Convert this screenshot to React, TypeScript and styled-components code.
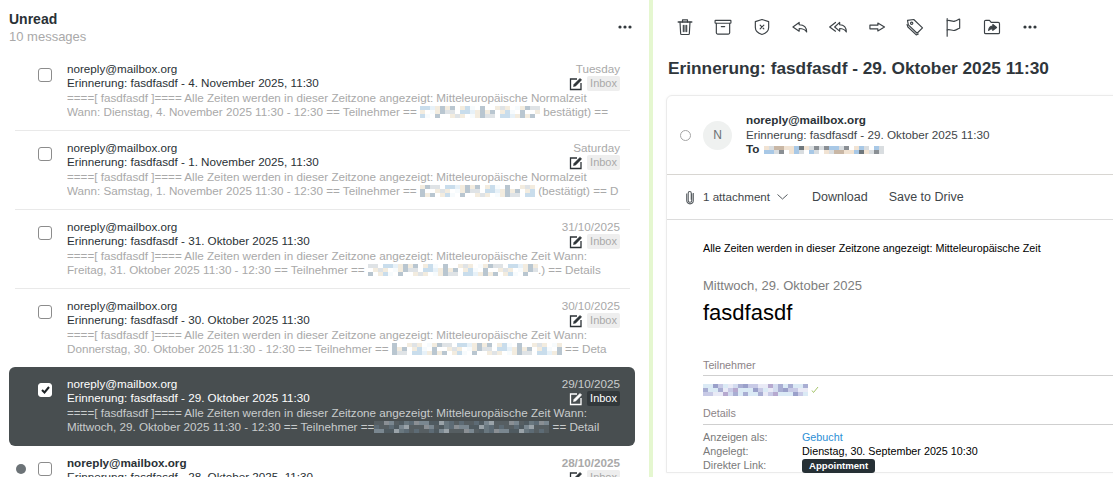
import React from 'react';
import styled, { createGlobalStyle } from 'styled-components';

const GlobalStyle = createGlobalStyle`
  html, body {
    margin: 0;
    height: 100%;
    overflow: hidden;
    background: #fff;
    font-family: "Liberation Sans", Arial, sans-serif;
    color: #2a3136;
  }
`;

const Page = styled.div`
  display: flex;
  width: 1113px;
  height: 477px;
  overflow: hidden;
`;

const ListPane = styled.section`
  flex: 0 0 649px;
  overflow: hidden;
`;

const Divider = styled.div`
  flex: 0 0 4px;
  background: #e5f7d0;
`;

const ListHeader = styled.header`
  display: flex;
  justify-content: space-between;
  align-items: center;
  box-sizing: border-box;
  height: 52px;
  padding: 2px 17px 0 9px;
`;

const TitleBlock = styled.div`
  margin-top: 2px;
`;

const Folder = styled.h2`
  margin: 0;
  font-size: 14px;
  line-height: 17px;
  font-weight: 700;
  color: #2a3136;
`;

const Count = styled.div`
  font-size: 13px;
  line-height: 17px;
  color: #a9a9a9;
`;

const MessageRow = styled.article<{ $selected?: boolean }>`
  position: relative;
  display: flex;
  height: 79px;
  box-sizing: border-box;
  margin-left: 9px;
  margin-top: ${p => (p.$selected ? '-1px' : '0')};
  width: 626px;
  padding: 10px 15px 0 7px;
  border-radius: ${p => (p.$selected ? '6px' : '0')};
  background: ${p => (p.$selected ? '#484e50' : 'transparent')};
  color: ${p => (p.$selected ? '#fff' : '#2a3136')};
`;

const RowSeparator = styled.div`
  height: 1px;
  margin: -1px 19px 0 15px;
  background: #e9e9e9;
`;

const UnreadDot = styled.span<{ $on?: boolean }>`
  flex: 0 0 10px;
  height: 10px;
  margin-top: 8px;
  border-radius: 50%;
  background: ${p => (p.$on ? '#6c7377' : 'transparent')};
`;

const Check = styled.span<{ $checked?: boolean }>`
  flex: 0 0 auto;
  display: flex;
  align-items: center;
  justify-content: center;
  box-sizing: border-box;
  width: 14px;
  height: 14px;
  margin: 6px 15px 0 12px;
  border: 1px solid #8c8c8c;
  border-radius: 3px;
  background: #fff;
  ${p => p.$checked && 'border-color: #fff;'}
`;

const RowBody = styled.div`
  flex: 1;
  min-width: 0;
  font-size: 11.66px;
  line-height: 14.4px;
`;

const TopLine = styled.div<{ $unread?: boolean }>`
  display: flex;
  justify-content: space-between;
  font-weight: ${p => (p.$unread ? 700 : 400)};
`;

const DateText = styled.span<{ $selected?: boolean }>`
  color: ${p => (p.$selected ? '#c9cccd' : '#a9a9a9')};
`;

const SubjectLine = styled.div`
  display: flex;
  justify-content: space-between;
  align-items: center;
  height: 14.4px;
`;

const Tags = styled.span`
  display: flex;
  align-items: center;
  gap: 4px;
`;

const InboxChip = styled.span<{ $selected?: boolean }>`
  padding: 0 3px;
  height: 15px;
  font-size: 11px;
  line-height: 15px;
  border-radius: 2px;
  background: ${p => (p.$selected ? '#32383b' : '#eeeeee')};
  color: ${p => (p.$selected ? '#fff' : '#a9a9a9')};
`;

const Preview = styled.div<{ $selected?: boolean }>`
  display: flex;
  align-items: center;
  height: 14.4px;
  white-space: pre;
  overflow: hidden;
  color: ${p => (p.$selected ? '#c9cccd' : '#a9a9a9')};
`;

const MosaicGrid = styled.span<{ $rows: number }>`
  flex: 0 0 auto;
  display: inline-grid;
  grid-auto-flow: column;
  grid-template-rows: repeat(${p => p.$rows}, 4px);
  grid-auto-columns: 5px;
`;

const ReadPane = styled.section`
  flex: 1;
  min-width: 0;
  overflow: hidden;
`;

const Toolbar = styled.div`
  display: flex;
  align-items: center;
  height: 54px;
  padding-left: 13px;
`;

const ToolButton = styled.span`
  flex: 0 0 38.3px;
  display: flex;
  justify-content: center;
  color: #3c4246;
`;

const MailTitle = styled.h1`
  margin: 1px 0 14px 15px;
  font-size: 17.28px;
  line-height: 26px;
  font-weight: 700;
  color: #2f363b;
`;

const MailCard = styled.div`
  width: 520px;
  margin-left: 13px;
  border: 1px solid #ebebeb;
  border-radius: 6px 0 0 0;
  box-shadow: 0 0 3px rgba(0, 0, 0, 0.04);
`;

const CardHeader = styled.div`
  display: flex;
  align-items: center;
  height: 78px;
  padding-left: 13px;
  border-bottom: 1px solid #d8d6d2;
`;

const Radio = styled.span`
  box-sizing: border-box;
  width: 11px;
  height: 11px;
  margin-right: 12px;
  border: 1px solid #a5a5a5;
  border-radius: 50%;
`;

const Avatar = styled.span`
  display: flex;
  align-items: center;
  justify-content: center;
  width: 29px;
  height: 29px;
  margin-right: 14px;
  border-radius: 50%;
  background: #eff1f0;
  font-size: 12px;
  color: #6a7074;
`;

const Sender = styled.div`
  font-size: 11.7px;
  line-height: 14.5px;
  font-weight: 700;
  color: #2a3136;
`;

const HeaderLine = styled.div`
  display: flex;
  align-items: center;
  gap: 5px;
  font-size: 11.7px;
  line-height: 14.5px;
  color: #3f464a;
`;

const ToLabel = styled.b`
  color: #2a3136;
`;

const AttachBar = styled.div`
  display: flex;
  align-items: center;
  height: 44px;
  padding-left: 19px;
  border-bottom: 1px solid #dcdcdc;
  font-size: 12.5px;
  color: #3f464a;
`;

const AttachCount = styled.span`
  margin: -1px 7px 0 9px;
  font-size: 11.6px;
`;

const Chevron = styled.svg`
  margin-right: 3px;
`;

const AttachAction = styled.span`
  margin-left: 21px;
`;

const MailBody = styled.div`
  padding: 21px 0 0 36px;
  font-size: 10.75px;
  color: #000;
`;

const ZoneNote = styled.div`
  line-height: 14px;
`;

const DateLine = styled.div`
  margin-top: 23px;
  font-size: 13px;
  line-height: 15px;
  color: #7d7d7d;
`;

const EventTitle = styled.div`
  margin-top: 6px;
  font-size: 22px;
  line-height: 28px;
`;

const SectionTitle = styled.div<{ $top: number; $pad: number }>`
  margin-top: ${p => p.$top}px;
  padding-bottom: ${p => p.$pad}px;
  border-bottom: 1px solid #cfcfcf;
  font-size: 10.75px;
  line-height: 14px;
  color: #8c8487;
`;

const Attendee = styled.div`
  display: flex;
  align-items: center;
  gap: 3px;
  margin-top: 8px;
`;

const DetailGrid = styled.div`
  display: grid;
  grid-template-columns: 99px 1fr;
  grid-auto-rows: 14px;
  margin-top: 5px;
  align-items: center;
  font-size: 10.75px;
`;

const DetailLabel = styled.span`
  color: #7a7a7a;
`;

const DetailLink = styled.span`
  color: #2d8fd5;
`;

const Badge = styled.span`
  justify-self: start;
  align-self: start;
  margin-top: 1px;
  padding: 0 7px;
  height: 14px;
  border-radius: 3px;
  background: #263035;
  color: #fff;
  font-size: 9.6px;
  line-height: 14px;
  font-weight: 700;
`;

const Glyph: React.FC<{ size?: number; children: React.ReactNode; sw?: number }> = ({ size = 20, sw = 1.4, children }) => (
  <svg width={size} height={size} viewBox="0 0 24 24" fill="none" stroke="currentColor" strokeWidth={sw} strokeLinecap="round" strokeLinejoin="round">
    {children}
  </svg>
);

const Dots: React.FC = () => (
  <svg width="14" height="4" viewBox="0 0 14 4" fill="#33393d">
    <circle cx="2" cy="2" r="1.6" />
    <circle cx="7" cy="2" r="1.6" />
    <circle cx="12" cy="2" r="1.6" />
  </svg>
);

const ComposeIcon: React.FC<{ light?: boolean }> = ({ light }) => (
  <svg width="14" height="14" viewBox="0 0 14 14" fill="none" stroke={light ? '#fff' : '#2c3236'}>
    <path d="M8 2H1.5v10.5H12V6" strokeWidth="1.3" />
    <path d="M4.5 9.5l.6-2.2L11 1.4l1.6 1.6-5.900 5.900z" fill={light ? '#fff' : '#2c3236'} strokeWidth="0.6" />
  </svg>
);

const TOOL_ICONS: React.ReactNode[] = [
  <><path d="M4 6h16" strokeWidth="2" /><path d="M9 6V3.500h6V6" /><path d="M6 6l.8 14a1 1 0 0 0 1 1h8.400a1 1 0 0 0 1-1L18 6" /><path d="M10 10v7.500M12 10v7.500M14 10v7.500" /></>,
  <><rect x="2.500" y="4" width="19" height="3.500" rx=".5" /><path d="M4 7.500V19a1.500 1.500 0 0 0 1.500 1.500h13A1.500 1.500 0 0 0 20 19V7.500" /><path d="M10 11.500h4" /></>,
  <><path d="M12 3l8 2.500v7c0 4.500-3.500 7-8 8.500-4.500-1.500-8-4-8-8.500v-7z" /><path d="M9.800 9.800l4.400 4.400M14.200 9.800l-4.400 4.400" /></>,
  <path d="M11 6.500L3.500 12l7.500 5v-3.200c4 0 7 1 9 4.200 0-5-3-8.500-9-8.700z" />,
  <><path d="M14 6.500L8 12l6 5v-3.200c3.500 0 6 1 8 4.200 0-5-2.500-8.500-8-8.700z" /><path d="M9 6.500L2 12l7 5" /></>,
  <path d="M3.500 9.800h9.500V7.200l8 4.800-8 4.800v-2.600H3.500z" />,
  <><path d="M3 4l7.500-1 10.500 10-6.500 6.500L4 9.500z" /><circle cx="8" cy="7.500" r="1.400" /><path d="M2.500 9l1 3 10 9.500 2.500-1" /></>,
  <><path d="M5 2v21" /><path d="M5 4.500c3-1.500 6 1.500 9 .5s4-2 6-2.500v11c-2 .5-3 1.500-6 2.500s-6-2-9-.5" /></>,
  <><path d="M3 8V5.500A1.500 1.500 0 0 1 4.500 4H9l2 2.500h8.500A1.500 1.500 0 0 1 21 8v10.500a1.500 1.500 0 0 1-1.500 1.500h-15A1.500 1.500 0 0 1 3 18.500z" /><path d="M13 9l4.500 3.500L13 16v-2c-2 0-3.500.5-5 2 .3-3 2-5 5-5z" fill="currentColor" /></>,
];

// stand-in for the address that is blurred in the picture
const Mosaic: React.FC<{ width: number; seed: number; tone: 'light' | 'dark' | 'blue' | 'mixed'; rows?: number }> = ({ width, seed, tone, rows = 3 }) => {
  const palettes = {
    light: ['#ffffff', '#e7f1f8', '#c9ddec', '#f3ecdf', '#dfe3e6', '#b9c6d0', '#f7fbfd'],
    dark: ['#5d6b75', '#7a8790', '#4f5a60', '#8a8f94', '#69777f', '#9aa3a9', '#565e62'],
    blue: ['#a9aed3', '#c8cae6', '#e9eaf6', '#9aa0ca', '#d3dcef', '#b6a9cf', '#dbeaf5'],
    mixed: ['#ffffff', '#f1e3d3', '#a8c8e6', '#8a8f94', '#d9dde0', '#c9b7a5', '#6f777c'],
  };
  const colors = palettes[tone];
  const cols = Math.floor(width / 5);
  const cells: string[] = [];
  let x = seed * 7 + 3;
  for (let i = 0; i < cols * rows; i++) {
    x = (x * 31 + 17) % 101;
    cells.push(colors[x % colors.length]);
  }
  return (
    <MosaicGrid $rows={rows}>
      {cells.map((c, i) => (
        <span key={i} style={{ background: c }} />
      ))}
    </MosaicGrid>
  );
};

interface Message {
  date: string;
  subject: string;
  first: string;
  before: string;
  after: string;
  blur: number;
  selected?: boolean;
  unread?: boolean;
}

const HEAD = '====[ fasdfasdf ]==== Alle Zeiten werden in dieser Zeitzone angezeigt: ';

const MESSAGES: Message[] = [
  { date: 'Tuesday', subject: 'Erinnerung: fasdfasdf - 4. November 2025, 11:30', first: HEAD + 'Mitteleuropäische Normalzeit', before: 'Wann: Dienstag, 4. November 2025 11:30 - 12:30 == Teilnehmer == ', after: ' bestätigt) ==', blur: 120 },
  { date: 'Saturday', subject: 'Erinnerung: fasdfasdf - 1. November 2025, 11:30', first: HEAD + 'Mitteleuropäische Normalzeit', before: 'Wann: Samstag, 1. November 2025 11:30 - 12:30 == Teilnehmer == ', after: ' (bestätigt) == D', blur: 115 },
  { date: '31/10/2025', subject: 'Erinnerung: fasdfasdf - 31. Oktober 2025 11:30', first: HEAD + 'Mitteleuropäische Zeit Wann:', before: 'Freitag, 31. Oktober 2025 11:30 - 12:30 == Teilnehmer == ', after: '.) == Details', blur: 170 },
  { date: '30/10/2025', subject: 'Erinnerung: fasdfasdf - 30. Oktober 2025 11:30', first: HEAD + 'Mitteleuropäische Zeit Wann:', before: 'Donnerstag, 30. Oktober 2025 11:30 - 12:30 == Teilnehmer == ', after: ' == Deta', blur: 170 },
  { date: '29/10/2025', subject: 'Erinnerung: fasdfasdf - 29. Oktober 2025 11:30', first: HEAD + 'Mitteleuropäische Zeit Wann:', before: 'Mittwoch, 29. Oktober 2025 11:30 - 12:30 == Teilnehmer ==', after: ' == Detail', blur: 175, selected: true },
  { date: '28/10/2025', subject: 'Erinnerung: fasdfasdf - 28. Oktober 2025, 11:30', first: HEAD + 'Mitteleuropäische Zeit Wann:', before: 'Dienstag, 28. Oktober 2025 11:30 - 12:30 == Teilnehmer == ', after: ' == Details', blur: 170, unread: true },
];

const App: React.FC = () => (
  <Page>
    <GlobalStyle />
    <ListPane>
      <ListHeader>
        <TitleBlock>
          <Folder>Unread</Folder>
          <Count>10 messages</Count>
        </TitleBlock>
        <Dots />
      </ListHeader>
      {MESSAGES.map((m, i) => (
        <React.Fragment key={m.date}>
          <MessageRow $selected={m.selected}>
            <UnreadDot $on={m.unread} />
            <Check $checked={m.selected}>
              {m.selected && (
                <svg width="9" height="8" viewBox="0 0 9 8" fill="none" stroke="#1d2225" strokeWidth="2">
                  <path d="M1 4l2.500 2.500L8 1" />
                </svg>
              )}
            </Check>
            <RowBody>
              <TopLine $unread={m.unread}>
                <span>noreply@mailbox.org</span>
                <DateText $selected={m.selected}>{m.date}</DateText>
              </TopLine>
              <SubjectLine>
                <span>{m.subject}</span>
                <Tags>
                  <ComposeIcon light={m.selected} />
                  <InboxChip $selected={m.selected}>Inbox</InboxChip>
                </Tags>
              </SubjectLine>
              <Preview $selected={m.selected}>{m.first}</Preview>
              <Preview $selected={m.selected}>
                {m.before}
                <Mosaic width={m.blur} seed={i} tone={m.selected ? 'dark' : 'light'} />
                {m.after}
              </Preview>
            </RowBody>
          </MessageRow>
          {i < 3 && <RowSeparator />}
        </React.Fragment>
      ))}
    </ListPane>
    <Divider />
    <ReadPane>
      <Toolbar>
        {TOOL_ICONS.map((icon, i) => (
          <ToolButton key={i}>
            <Glyph>{icon}</Glyph>
          </ToolButton>
        ))}
        <ToolButton>
          <Dots />
        </ToolButton>
      </Toolbar>
      <MailTitle>Erinnerung: fasdfasdf - 29. Oktober 2025 11:30</MailTitle>
      <MailCard>
        <CardHeader>
          <Radio />
          <Avatar>N</Avatar>
          <div>
            <Sender>noreply@mailbox.org</Sender>
            <HeaderLine>Erinnerung: fasdfasdf - 29. Oktober 2025 11:30</HeaderLine>
            <HeaderLine>
              <ToLabel>To</ToLabel>
              <Mosaic width={120} seed={9} tone="mixed" rows={2} />
            </HeaderLine>
          </div>
        </CardHeader>
        <AttachBar>
          <svg width="8" height="16" viewBox="0 0 9 16" fill="none" stroke="#555b5f" strokeWidth="1.2">
            <path d="M6.500 4v8a2 2 0 0 1-4 0V3.500a1.700 1.700 0 0 1 3.400 0V11" />
            <path d="M8.200 3.500V12a3.700 3.700 0 0 1-7.400 0V4" />
          </svg>
          <AttachCount>1 attachment</AttachCount>
          <Chevron width="11" height="6" viewBox="0 0 11 6" fill="none" stroke="#555b5f">
            <path d="M.5.500l5 4.500 5-4.500" />
          </Chevron>
          <AttachAction>Download</AttachAction>
          <AttachAction>Save to Drive</AttachAction>
        </AttachBar>
        <MailBody>
          <ZoneNote>Alle Zeiten werden in dieser Zeitzone angezeigt: Mitteleuropäische Zeit</ZoneNote>
          <DateLine>Mittwoch, 29. Oktober 2025</DateLine>
          <EventTitle>fasdfasdf</EventTitle>
          <SectionTitle $top={31} $pad={3}>Teilnehmer</SectionTitle>
          <Attendee>
            <Mosaic width={105} seed={4} tone="blue" />
            <svg width="8" height="8" viewBox="0 0 8 8" fill="none" stroke="#a5c46a">
              <path d="M1 4.500l1.500 2L7 1" />
            </svg>
          </Attendee>
          <SectionTitle $top={10} $pad={4}>Details</SectionTitle>
          <DetailGrid>
            <DetailLabel>Anzeigen als:</DetailLabel>
            <DetailLink>Gebucht</DetailLink>
            <DetailLabel>Angelegt:</DetailLabel>
            <span>Dienstag, 30. September 2025 10:30</span>
            <DetailLabel>Direkter Link:</DetailLabel>
            <Badge>Appointment</Badge>
          </DetailGrid>
        </MailBody>
      </MailCard>
    </ReadPane>
  </Page>
);

export default App;
